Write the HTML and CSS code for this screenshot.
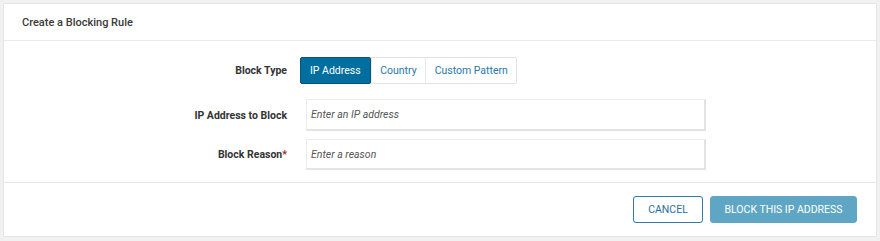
FILE: index.html
```html
<!DOCTYPE html>
<html lang="en">
<head>
    <meta charset="UTF-8">
    <meta name="viewport" content="width=device-width, initial-scale=1.0">
    <title>Create a Blocking Rule</title>
    <link rel="stylesheet" href="styles.css">
</head>
<body>

    <div class="panel">
        <div class="panel-header">
            <h2>Create a Blocking Rule</h2>
        </div>

        <div class="panel-body">
            <div class="form-row row-type">
                <label class="form-label">Block Type</label>
                <div class="segmented">
                    <button class="seg active">IP Address</button>
                    <button class="seg">Country</button>
                    <button class="seg">Custom Pattern</button>
                </div>
            </div>
            <div class="form-row row-ip">
                <label class="form-label" for="ip">IP Address to Block</label>
                <input type="text" id="ip" class="text-input" placeholder="Enter an IP address">
            </div>
            <div class="form-row row-reason">
                <label class="form-label" for="reason">Block Reason<span class="req">*</span></label>
                <input type="text" id="reason" class="text-input" placeholder="Enter a reason">
            </div>
        </div>

        <div class="panel-footer">
            <button class="btn btn-outline">CANCEL</button>
            <button class="btn btn-primary">BLOCK THIS IP ADDRESS</button>
        </div>
    </div>

</body>
</html>
```

FILE: styles.css
```css
* {
    margin: 0;
    padding: 0;
    box-sizing: border-box;
}

body {
    background-color: #f1f1f1;
    font-family: Roboto, "Liberation Sans", sans-serif;
    font-size: 11px;
    color: #333;
    padding: 3px 3px 4px 3px;
    height: 241px;
}

.panel {
    background-color: #fff;
    border: 1px solid #e6e6e6;
    height: 234px;
    display: flex;
    flex-direction: column;
}

.panel-header {
    height: 37px;
    display: flex;
    align-items: center;
    padding-left: 18px;
    border-bottom: 1px solid #e9e9e9;
}

.panel-header h2 {
    font-size: 11px;
    font-weight: 500;
    color: #3a3a3a;
}

.panel-body {
    flex: 1;
    padding-top: 16px;
    border-bottom: 1px solid #e6e6e6;
}

.form-row {
    display: flex;
    align-items: center;
}

.form-label {
    width: 283px;
    text-align: right;
    font-size: 10.5px;
    font-weight: 700;
    color: #333;
}

.req {
    color: #a4262c;
}

.row-type {
    height: 27px;
}

.row-ip {
    margin-top: 15px;
}

.row-reason {
    margin-top: 8px;
}

.segmented {
    display: flex;
    margin-left: 13px;
    border: 1px solid #e2e2e2;
    border-radius: 2px;
}

.seg {
    background: #fff;
    border: none;
    border-left: 1px solid #e8e8e8;
    color: #2a78a8;
    font-family: inherit;
    font-size: 10.5px;
    height: 25px;
    padding: 0 8.5px;
    cursor: pointer;
}

.seg:first-child {
    border-left: none;
}

.seg.active {
    background-color: #006f9f;
    color: #fff;
    padding: 0 9px;
    height: 27px;
    margin: -1px 0 -1px -1px;
    border: 1px solid #0b5479;
    border-radius: 2px;
}

.text-input {
    margin-left: 19px;
    width: 400px;
    height: 32px;
    border: 1px solid #ececec;
    border-bottom: 2px solid #e3e3e3;
    border-right: 2px solid #e3e3e3;
    padding: 0 4px;
    font-family: inherit;
    font-size: 10.5px;
    outline: none;
}

.row-reason .text-input {
    height: 31px;
}

.text-input::placeholder {
    color: #555;
    font-style: italic;
}

.panel-footer {
    height: 53px;
    display: flex;
    align-items: center;
    justify-content: flex-end;
    gap: 7px;
    padding-right: 19px;
}

.btn {
    height: 27px;
    font-family: inherit;
    font-size: 10.5px;
    border-radius: 3px;
    cursor: pointer;
}

.btn-outline {
    width: 70px;
    background: #fff;
    border: 1px solid #2f7aa9;
    color: #2a6f9a;
}

.btn-primary {
    width: 147px;
    background-color: #5ea6c4;
    border: 1px solid #5ea6c4;
    color: #fff;
}
```
